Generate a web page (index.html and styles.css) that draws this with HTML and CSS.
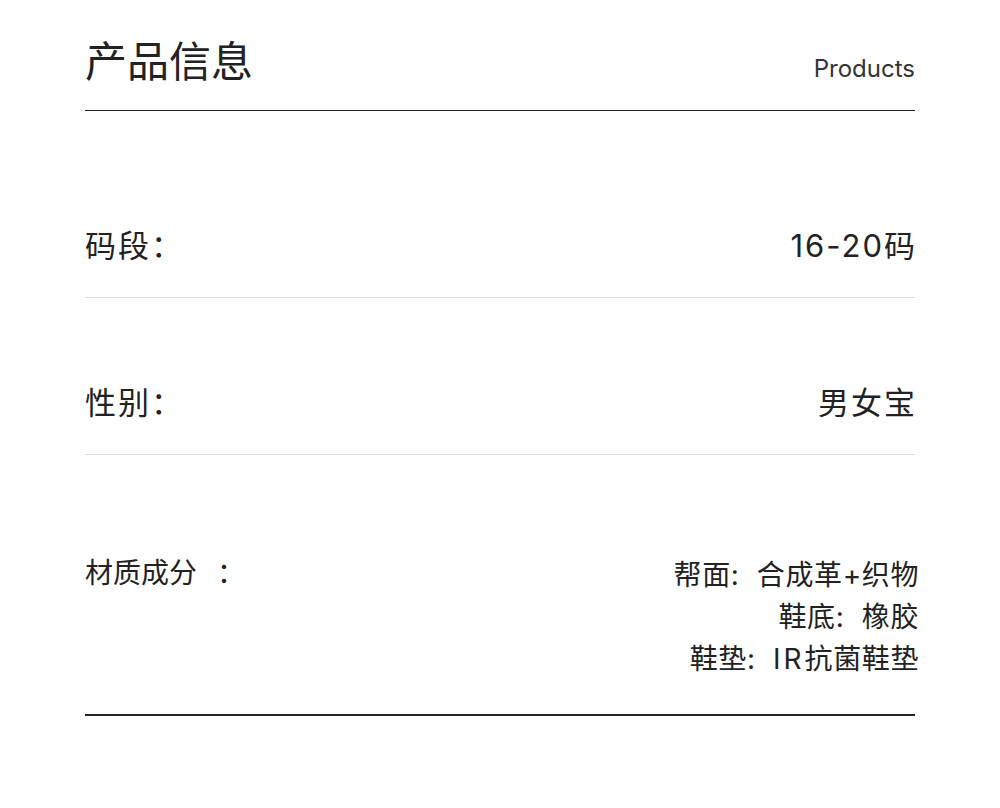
FILE: index.html
```html
<!DOCTYPE html>
<html lang="zh">
<head>
<meta charset="utf-8">
<link rel="stylesheet" href="styles.css">
</head>
<body>
<div class="sheet">
  <div class="header">
    <h1 class="title">产品信息</h1>
    <span class="subtitle">Products</span>
  </div>
  <div class="row first">
    <div class="label">码段：</div>
    <div class="value">16-20码</div>
  </div>
  <div class="row">
    <div class="label">性别：</div>
    <div class="value">男女宝</div>
  </div>
  <div class="row last">
    <div class="label">材质成分<span class="colon">：</span></div>
    <div class="value multi">
      <div>帮面: 合成革+织物</div>
      <div>鞋底: 橡胶</div>
      <div>鞋垫: <span class="latin">IR</span>抗菌鞋垫</div>
    </div>
  </div>
</div>
</body>
</html>
```
FILE: styles.css
```css
html, body {
  margin: 0;
  padding: 0;
  background: #ffffff;
}
body {
  font-family: "Inter", "Noto Sans CJK SC", sans-serif;
  color: #222222;
}
.sheet {
  width: 830px;
  margin: 0 0 0 85px;
}
.header {
  display: flex;
  justify-content: space-between;
  align-items: baseline;
  padding-top: 33px;
  padding-bottom: 25px;
  border-bottom: 1px solid #222222;
}
.title {
  margin: 0;
  font-family: "Noto Sans CJK SC", sans-serif;
  font-size: 42px;
  font-weight: 400;
  line-height: 52px;
}
.subtitle {
  font-family: "Inter", sans-serif;
  font-size: 24px;
  color: #333333;
}
.row {
  display: flex;
  justify-content: space-between;
  align-items: flex-start;
  padding: 84px 0 30px;
  border-bottom: 1px solid #dddddd;
  font-size: 31px;
  letter-spacing: 2px;
  line-height: 42px;
}
.row.first {
  margin-top: 30px;
}
.row.last {
  padding-top: 97px;
  padding-bottom: 34px;
  border-bottom: 2px solid #222222;
  font-size: 28px;
  letter-spacing: 0;
}
.colon {
  margin-left: 20px;
}
.value {
  text-align: right;
  margin-right: -2px;
}
.value.multi {
  margin-top: 2px;
  margin-right: -4px;
  letter-spacing: 0.6px;
  word-spacing: 9px;
}
.latin {
  letter-spacing: 3px;
}
```
